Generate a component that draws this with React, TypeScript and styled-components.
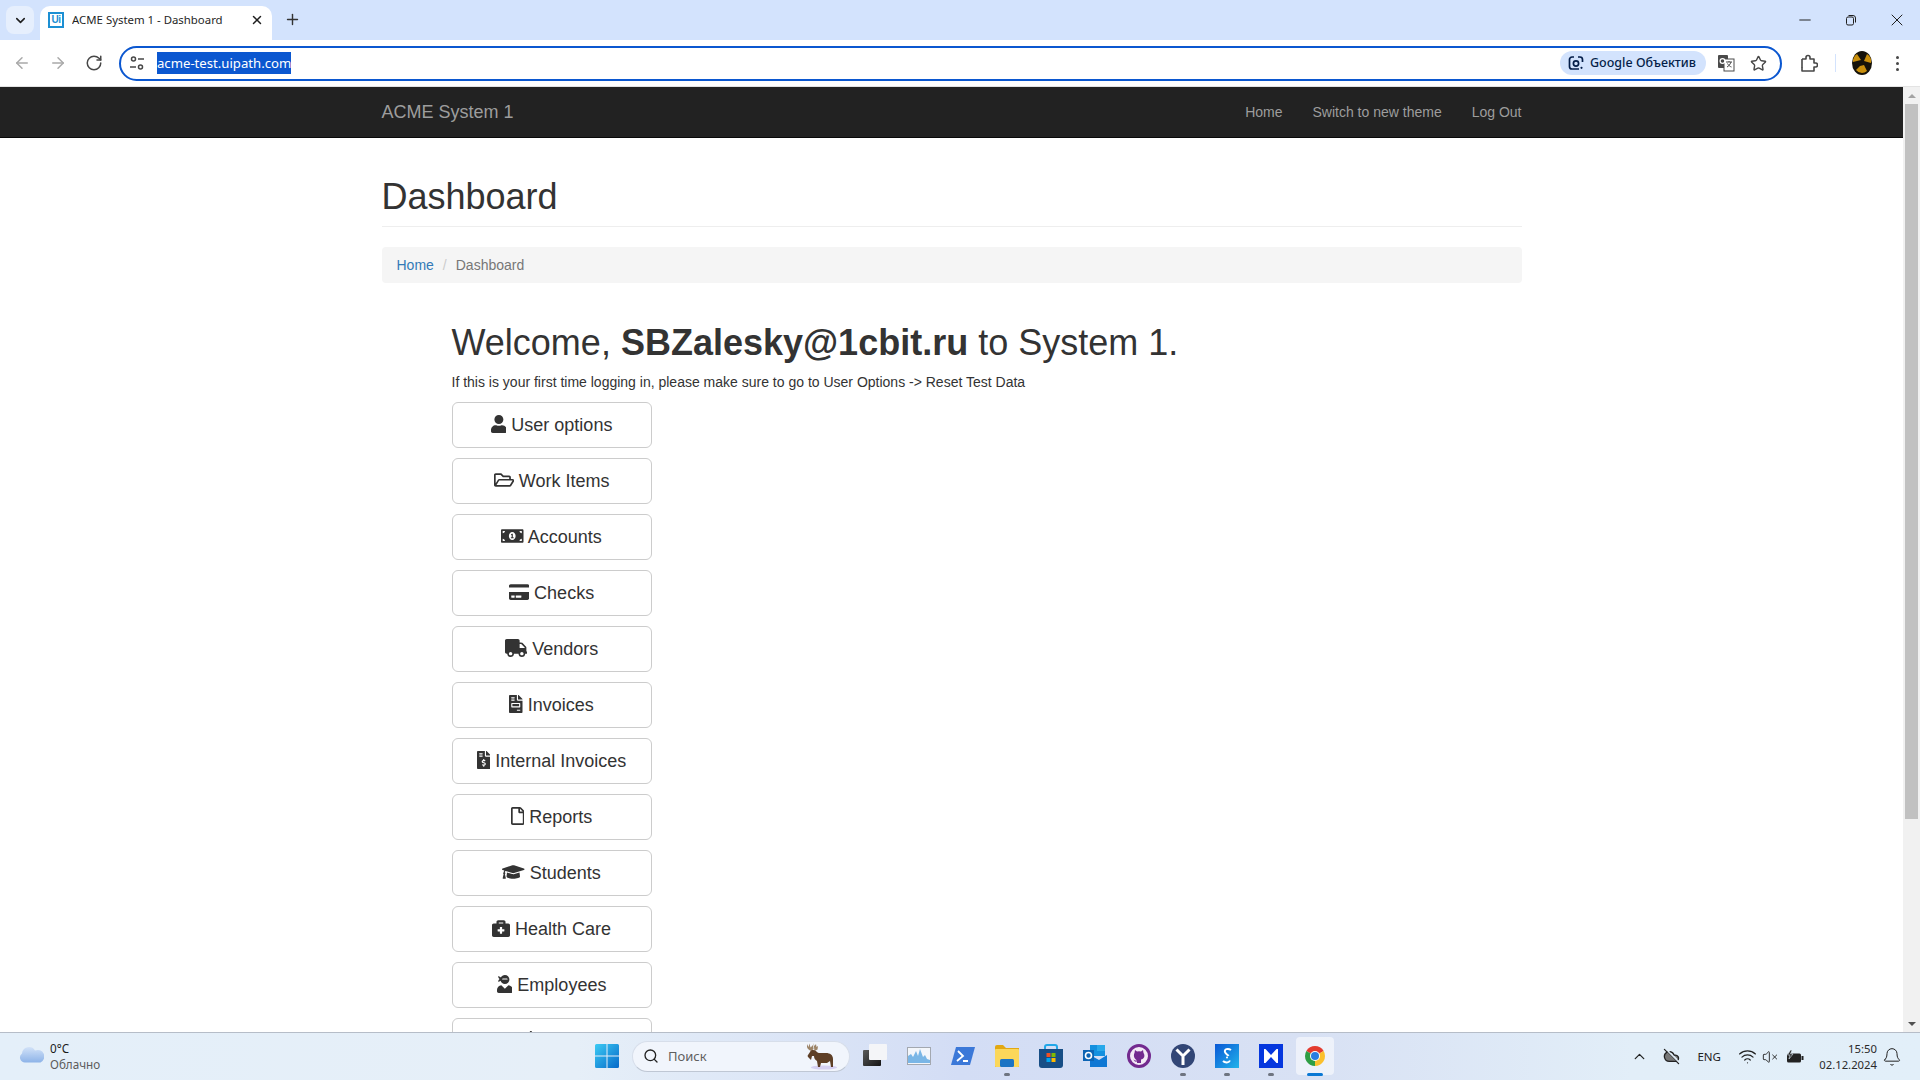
import React from "react";
import styled, { createGlobalStyle } from "styled-components";
import {
  FaUser, FaRegFolderOpen, FaMoneyBillAlt, FaCreditCard, FaTruck, FaFileInvoice,
  FaFileInvoiceDollar, FaRegFile, FaGraduationCap, FaBriefcaseMedical, FaUserNinja, FaBell,
} from "react-icons/fa";
import {
  ArrowLeft, ArrowRight, RotateCw, Star, X, Plus, ChevronDown, Minus, ChevronUp,
  Bell, Wifi, Search, VolumeX, CloudOff,
} from "lucide-react";

const Global = createGlobalStyle`
  html, body { margin: 0; padding: 0; height: 100%; overflow: hidden; background: #fff; }
  * { box-sizing: border-box; }
  #root { height: 100%; }
`;

const Screen = styled.div`
  height: 1080px; width: 1920px; display: flex; flex-direction: column; overflow: hidden;
  font-family: "Liberation Sans", Arial, sans-serif; color: #333;
`;

/* ---------- Browser chrome ---------- */
const UiFont = `"Noto Sans", "Open Sans", sans-serif`;
const TabStrip = styled.div`
  height: 40px; flex: none; background: #d3e3fd; display: flex; align-items: flex-end;
  padding-left: 6px; color: #1f1f1f;
`;
const TabSearch = styled.div`
  width: 28px; height: 28px; margin-bottom: 6px; border-radius: 8px; background: #e6effd;
  display: flex; align-items: center; justify-content: center;
`;
const Tab = styled.div`
  width: 232px; height: 34px; margin-left: 6px; background: #fff; border-radius: 10px 10px 0 0;
  display: flex; align-items: center; padding: 0 8px 6px; gap: 8px;
`;
const Favicon = styled.div`
  width: 16px; height: 16px; flex: none; border: 2px solid #1c8fd3; color: #1c8fd3;
  font: bold 10px/12px "Liberation Sans", sans-serif; text-align: center; letter-spacing: -0.5px;
`;
const TabTitle = styled.span`
  flex: 1; font: 11.4px/16px ${UiFont}; white-space: nowrap; overflow: hidden; color: #1f1f1f;
`;
const NewTab = styled.div`
  width: 28px; height: 28px; margin: 0 0 6px 6px; display: flex; align-items: center; justify-content: center;
  transform: translateY(-1px);
`;
const StripSpacer = styled.div`flex: 1;`;
const WindowButtons = styled.div`
  display: flex; align-self: stretch; align-items: center; padding-right: 23px; gap: 46px; color: #1f1f1f;
`;
const WindowButton = styled.div`width: 0; display: flex; justify-content: center; align-items: center; & > svg { flex: none; }`;

const Toolbar = styled.div`
  height: 47px; flex: none; background: #fff; border-bottom: 1px solid #e3e3e3; display: flex; align-items: center;
  border-radius: 0 8px 0 0; position: relative; color: #474747;
`;
const NavButtons = styled.div`
  width: 119px; flex: none; display: flex; align-items: center; padding-left: 13px; gap: 18px;
`;
const AddressBar = styled.div`
  width: 1663px; height: 35px; flex: none; border: 2px solid #0b57d0; border-radius: 18px; display: flex; align-items: center;
  padding: 0 9px 0 8px; background: #fff;
`;
const UrlText = styled.span`
  margin-left: 12px; background: #0b57d0; color: #fff; font: 13.15px/22px ${UiFont}; height: 22px; white-space: nowrap;
`;
const BarSpacer = styled.div`flex: 1;`;
const LensChip = styled.div`
  width: 146px; height: 24px; border-radius: 12px; background: #d3e3fd; display: flex; align-items: center;
  padding-left: 8px; gap: 6px; color: #041e49; font: 500 12.5px/16px ${UiFont}; white-space: nowrap;
`;
const BarIcons = styled.div`
  display: flex; align-items: center; gap: 15px; margin-left: 11px; margin-right: 4px;
`;
const ToolbarRight = styled.div`
  flex: 1; display: flex; align-items: center; padding-left: 18px; gap: 0;
`;
const Separator = styled.div`width: 1px; height: 18px; background: #d3e3fd; margin: 0 15px 0 17px;`;
const Avatar = styled.div`margin-right: 23px; display: flex;`;
const Dots = styled.div`display: flex; flex-direction: column; gap: 3px;`;
const Dot = styled.span`width: 3px; height: 3px; border-radius: 50%; background: #474747; display: block;`;

/* ---------- Page viewport ---------- */
const Viewport = styled.div`flex: 1; min-height: 0; display: flex;`;
const Page = styled.main`flex: 1; min-width: 0; overflow: hidden; background: #fff;`;

const Navbar = styled.nav`
  height: 51px; background: #222; border-bottom: 1px solid #080808;
`;
const Container = styled.div`
  width: 1170px; margin: 0 auto; padding: 0 15px;
`;
const NavInner = styled(Container)`
  display: flex; justify-content: space-between; align-items: center; height: 50px; padding-bottom: 1px;
`;
const Brand = styled.a`font-size: 18px; line-height: 20px; color: #9d9d9d;`;
const NavLinks = styled.div`display: flex; gap: 30px;`;
const NavLink = styled.a`font-size: 14px; line-height: 20px; color: #9d9d9d;`;

const PageHeader = styled.header`
  margin: 39px 0 20px; padding-bottom: 9px; border-bottom: 1px solid #eee;
`;
const Title = styled.h1`
  margin: 0; font-size: 36px; line-height: 39.6px; font-weight: 500; color: #333;
`;
const Breadcrumb = styled.div`
  background: #f5f5f5; border-radius: 4px; padding: 8px 15px; font-size: 14px; line-height: 20px;
  margin-bottom: 20px; display: flex;
`;
const Crumb = styled.a`color: #337ab7;`;
const CrumbSep = styled.span`color: #ccc; padding: 0 9px;`;
const CrumbCurrent = styled.span`color: #777;`;
const Body = styled.section`padding: 20px 70px 0;`;
const Welcome = styled.h1`
  margin: 0 0 10px; font-size: 36px; line-height: 39.6px; font-weight: 500; color: #333;
  & strong { font-weight: 700; }
`;
const Lead = styled.p`margin: 0 0 10px; font-size: 14px; line-height: 20px; color: #333;`;
const MenuList = styled.div`display: flex; flex-direction: column; gap: 10px;`;
const MenuButton = styled.a`
  display: block; width: 200px; height: 46px; padding: 10px 16px; border: 1px solid #ccc; border-radius: 6px;
  background: #fff; color: #333; font-size: 18px; line-height: 24px; text-align: center; white-space: nowrap;
`;
const MenuGlyph = styled.span<{ $w: number }>`
  display: inline-block; width: ${(p) => p.$w}px; height: 18px; vertical-align: -2px;
  & > svg { display: block; width: 100%; height: 100%; }
`;

const Scrollbar = styled.div`
  width: 17px; flex: none; background: #f1f1f1; display: flex; flex-direction: column; align-items: center;
`;
const ScrollArrow = styled.div<{ $down?: boolean }>`
  height: 17px; flex: none; width: 100%; display: flex; align-items: center; justify-content: center;
  &::before {
    content: ""; border-left: 4px solid transparent; border-right: 4px solid transparent;
    ${(p) => (p.$down ? "border-top: 4px solid #505050;" : "border-bottom: 4px solid #a3a3a3;")}
  }
`;
const ScrollThumb = styled.div`width: 13px; height: 715px; background: #c1c1c1; flex: none;`;
const ScrollGap = styled.div`flex: 1;`;

/* ---------- Taskbar ---------- */
const Taskbar = styled.footer`
  height: 48px; flex: none; border-top: 1px solid #b6bdc8;
  background: linear-gradient(90deg, #e4eff9 0%, #e6eff8 30%, #d3ddf5 50%, #d8e1f4 68%, #e2eef8 85%, #e2eff9 100%);
  display: grid; grid-template-columns: 1fr auto 1fr; align-items: center; font-family: ${UiFont}; color: #1a1a1a;
`;
const Weather = styled.div`display: flex; align-items: center; padding-left: 18px; gap: 6px;`;
const WeatherGlyph = styled.div`display: flex; margin-bottom: 6px;`;
const WeatherText = styled.div`display: flex; flex-direction: column; font-size: 11.7px; line-height: 16px; margin-top: -2px;`;
const WeatherNote = styled.span`color: #5c5c5c;`;
const TaskCenter = styled.div`display: flex; align-items: center; padding: 0 0 1px 2px;`;
const SearchBox = styled.div`
  width: 218px; height: 31px; border-radius: 16px; background: #f1f5fc; border: 1px solid #d7deea; border-bottom-color: #bfc7d4;
  display: flex; align-items: center; padding: 0 11px 0 10px; gap: 9px; color: #5f5f5f; font-size: 13px; margin: 0 3px;
`;
const SearchLabel = styled.span`flex: 1;`;
const TaskIcon = styled.div<{ $active?: boolean }>`
  width: 44px; height: 46px; position: relative; display: flex; align-items: center; justify-content: center;
  &::before {
    content: ""; position: absolute; left: 3px; right: 3px; top: 4px; bottom: 4px; border-radius: 4px;
    background: ${(p) => (p.$active ? "rgba(255,255,255,.55)" : "transparent")};
  }
  & > svg { position: relative; }
`;
const RunDot = styled.span<{ $active?: boolean }>`
  position: absolute; bottom: 3px; left: 50%; transform: translateX(-50%); height: 3px; border-radius: 2px;
  width: ${(p) => (p.$active ? "16px" : "6px")}; background: ${(p) => (p.$active ? "#0a78d4" : "#6e7480")};
`;
const Tray = styled.div`
  display: flex; align-items: center; justify-content: flex-end; color: #222; padding-right: 18px;
`;
const TraySlot = styled.div<{ $w: number }>`
  width: ${(p) => p.$w}px; display: flex; justify-content: center; align-items: center; font-size: 11.5px;
`;
const Clock = styled.div`
  display: flex; flex-direction: column; align-items: flex-end; font-size: 11.3px; line-height: 16px; margin-left: 11px; margin-right: 5px; color: #2a2a2a; white-space: nowrap;
`;

/* ---------- Drawings ---------- */
const TuneIcon = () => (
  <svg width="16" height="16" viewBox="0 0 16 16" fill="none" stroke="#474747" strokeWidth="1.5">
    <circle cx="4.5" cy="4" r="2" /><path d="M9 4h6M1 12h6" /><circle cx="11.5" cy="12" r="2" />
  </svg>
);
const RestoreIcon = () => (
  <svg width="12" height="12" viewBox="0 0 12 12" fill="none" stroke="#1f1f1f" strokeWidth="1">
    <rect x="1.5" y="3" width="7" height="8" rx="1.5" /><path d="M3.5 1.5h4.5a2.5 2.5 0 0 1 2.5 2.5v4.5" />
  </svg>
);
const LensIcon = () => (
  <svg width="16" height="16" viewBox="0 0 16 16" fill="none" stroke="#041e49" strokeWidth="1.7">
    <path d="M6 2H4a2.5 2.5 0 0 0-2.5 2.5v7A2.5 2.5 0 0 0 4 14h7M10 2h2a2.5 2.5 0 0 1 2.5 2.5V7" />
    <circle cx="8" cy="8.5" r="2.6" /><circle cx="13.5" cy="12.8" r="1.1" fill="#041e49" stroke="none" />
  </svg>
);
const TranslateIcon = () => (
  <svg width="18" height="18" viewBox="0 0 18 18">
    <rect x="1" y="1" width="10" height="13" rx="1" fill="#4a4a4a" />
    <rect x="7" y="5" width="10" height="12" fill="#fff" stroke="#4a4a4a" />
    <circle cx="5.5" cy="7" r="2.4" fill="none" stroke="#fff" strokeWidth="1.2" />
    <path d="M9 8h6M12 7v1M14 8c-1 3-2.500 4-4 5M10.500 9.500c1 2 2.500 3 4 3.500" fill="none" stroke="#4a4a4a" />
  </svg>
);
const ExtensionIcon = () => (
  <svg width="18" height="18" viewBox="0 0 18 18" fill="none" stroke="#474747" strokeWidth="1.6" strokeLinejoin="round">
    <path d="M2 5h4V3.500a2 2 0 0 1 4 0V5h4v4h1.500a2 2 0 0 1 0 4H14v4H2v-3.500" />
    <path d="M2 5v9" />
  </svg>
);
const ProfileIcon = () => (
  <svg width="22" height="24" viewBox="0 0 22 24">
    <ellipse cx="11" cy="12" rx="10" ry="12" fill="#15120a" />
    <path d="M10 9 6 3a9 9 0 0 0-4 8zM13 10l3-7a9 9 0 0 1 4 9zM9 15l-4 4a8 8 0 0 0 6 3 8 8 0 0 0 5-2l-3-6z" fill="#c98f0c" />
  </svg>
);
const CloudIcon = () => (
  <svg width="26" height="18" viewBox="0 0 26 18">
    <defs><linearGradient id="cl" x1="0" y1="0" x2="0" y2="1"><stop offset="0" stopColor="#d2e2f8" /><stop offset="1" stopColor="#8db3e8" /></linearGradient></defs>
    <path d="M6 17.500A5 5 0 0 1 3 8.500 7 7 0 0 1 16 5.500 5.500 5.500 0 0 1 21.500 17.500z" fill="url(#cl)" transform="translate(1 0)" />
  </svg>
);
const WindowsLogo = () => (
  <svg width="24" height="24" viewBox="0 0 24 24">
    <defs><linearGradient id="wl" x1="0" y1="0" x2="1" y2="1"><stop offset="0" stopColor="#3ccbf4" /><stop offset="1" stopColor="#0669c9" /></linearGradient></defs>
    <path d="M0 1.500A1.500 1.500 0 0 1 1.500 0h10v11.500H0zM12.500 0h10A1.500 1.500 0 0 1 24 1.500v10H12.500zM0 12.500h11.500V24h-10A1.500 1.500 0 0 1 0 22.500zM12.500 12.500H24v10a1.500 1.500 0 0 1-1.500 1.500h-10z" fill="url(#wl)" />
  </svg>
);
const Moose = () => (
  <svg width="34" height="27" viewBox="0 0 34 27">
    <ellipse cx="20" cy="24.500" rx="13" ry="2" fill="#d5d0f2" />
    <path d="M3 1l1.500 3 1-3.500 1 4L9 2l.5 4-2 2c-2-.5-4-2-4.500-4z" fill="#9c8468" />
    <path d="M9.500 0l1 3 1.500-2 .5 3 1.500-1-.5 3.500-3 1.500z" fill="#9c8468" />
    <path d="M6 9c1-2.500 4-2.500 6-1 1 .8 1.500 2 3 2h7c4 0 7 2 7 6v8h-2l-1-6-3 2-6 0-1 4h-2l-1-6c-2-1-3-3-3-5l-2 0-1 4-2-2c-1-1-2-2-1-3z" fill="#5e3f27" />
  </svg>
);
const DesktopsIcon = () => (
  <svg width="24" height="24" viewBox="0 0 24 24">
    <defs><linearGradient id="dk" x1="0" y1="0" x2="1" y2="1"><stop offset="0" stopColor="#5a5a5a" /><stop offset="1" stopColor="#141414" /></linearGradient></defs>
    <rect x="0" y="6" width="18" height="16" rx="1" fill="url(#dk)" />
    <rect x="6" y="0" width="18" height="16" rx="1" fill="#f4f5f8" />
  </svg>
);
const MonitorIcon = () => (
  <svg width="24" height="18" viewBox="0 0 24 18">
    <rect x="0.500" y="0.500" width="23" height="17" fill="#f3f6fb" stroke="#a3a8b0" />
    <path d="M1 16V9l3-2 2 3 3-6 2 5 2-7 3 8 2-2 2 4 3 1v3z" fill="#7ab6e6" />
  </svg>
);
const PsIcon = () => (
  <svg width="24" height="18" viewBox="0 0 24 18">
    <path d="M5 0h19l-5 18H0z" fill="#3b78d8" />
    <path d="M7 4l5 5-6 5M12 14h5" fill="none" stroke="#fff" strokeWidth="1.800" />
  </svg>
);
const FolderIcon = () => (
  <svg width="24" height="22" viewBox="0 0 24 22">
    <path d="M0 2a2 2 0 0 1 2-2h6l3 3h13v19H0z" fill="#e2a812" />
    <rect y="4" width="24" height="18" rx="1" fill="#fbd75a" />
    <rect x="5" y="14" width="14" height="8" rx="1.500" fill="#1b74c4" />
  </svg>
);
const StoreIcon = () => (
  <svg width="24" height="24" viewBox="0 0 24 24">
    <path d="M6 5V3a2 2 0 0 1 2-2h8a2 2 0 0 1 2 2v2" fill="none" stroke="#22a7e8" strokeWidth="2" />
    <path d="M0 5h24v16a3 3 0 0 1-3 3H3a3 3 0 0 1-3-3z" fill="#174e86" />
    <rect x="7.500" y="9" width="4" height="4" fill="#f25022" /><rect x="12.500" y="9" width="4" height="4" fill="#7fba00" />
    <rect x="7.500" y="14" width="4" height="4" fill="#00a4ef" /><rect x="12.500" y="14" width="4" height="4" fill="#ffb900" />
  </svg>
);
const OutlookIcon = () => (
  <svg width="24" height="22" viewBox="0 0 24 22">
    <rect x="7" y="0" width="15" height="11" fill="#1490df" />
    <rect x="14" y="0" width="8" height="6" fill="#28a8ea" />
    <path d="M7 10l9 5 8-5v12H7z" fill="#0f78d4" />
    <rect x="0" y="5" width="11" height="11" fill="#0c64b4" />
    <circle cx="5.500" cy="10.500" r="3" fill="none" stroke="#fff" strokeWidth="1.600" />
  </svg>
);
const GithubIcon = () => (
  <svg width="24" height="24" viewBox="0 0 24 24">
    <circle cx="12" cy="12" r="10.500" fill="#f3eaf6" stroke="#732a8f" strokeWidth="3" />
    <path d="M8 6l2 1.500a7 7 0 0 1 4 0L16 6l.5 3c2 3 .5 6-2.500 6.500V19h-4v-1.500c-2 .5-3-.5-3.500-2 1 .5 1.500 1.500 3.500.8C7.500 15 6 12 7.500 9z" fill="#732a8f" />
  </svg>
);
const YIcon = () => (
  <svg width="24" height="24" viewBox="0 0 24 24">
    <circle cx="12" cy="12" r="12" fill="#324676" />
    <path d="M5.500 5.500 12 12l6.500-6.500M12 12v9" fill="none" stroke="#fff" strokeWidth="3" />
  </svg>
);
const SquareSIcon = () => (
  <svg width="24" height="24" viewBox="0 0 24 24">
    <defs><linearGradient id="ss" x1="0" y1="0" x2="1" y2="1"><stop offset="0" stopColor="#0a58d6" /><stop offset="1" stopColor="#22b4ea" /></linearGradient></defs>
    <rect width="24" height="24" fill="url(#ss)" />
    <path d="M16 6c-3-2-7-1-6 2 .5 2 3 3 3.500 4" fill="none" stroke="#fff" strokeWidth="2" />
    <path d="M8 17c2 2 6 2 7-.5" fill="none" stroke="#fff" strokeWidth="2" />
    <circle cx="12" cy="13.500" r="1" fill="#fff" />
  </svg>
);
const BowtieIcon = () => (
  <svg width="24" height="24" viewBox="0 0 24 24">
    <rect width="24" height="24" fill="#0537de" />
    <rect x="5" y="5" width="14" height="14" fill="#fff" />
    <path d="M6.500 5h11L12 11zM6.500 19h11L12 13z" fill="#0537de" />
  </svg>
);
const ChromeIcon = () => (
  <svg width="24" height="24" viewBox="0 0 48 48">
    <path d="M24 24 6.680 14A20 20 0 0 1 41.320 14z" fill="#e33b2e" />
    <path d="M24 24 41.320 14A20 20 0 0 1 24 44z" fill="#fbc02d" />
    <path d="M24 24 24 44A20 20 0 0 1 6.680 14z" fill="#2f9e44" />
    <circle cx="24" cy="24" r="10" fill="#fff" /><circle cx="24" cy="24" r="8" fill="#2a7de1" />
  </svg>
);
const BatteryIcon = () => (
  <svg width="18" height="14" viewBox="0 0 18 14">
    <rect x="1" y="3.500" width="14" height="9" rx="1.500" fill="#222" />
    <rect x="15.500" y="6" width="2" height="4" fill="#222" />
    <path d="M4.500 0 1.500 5h2.500L3 9l4-5H4.500L6 0z" fill="#222" stroke="#e2eef8" strokeWidth=".6" />
  </svg>
);

/* ---------- Data ---------- */
const menu = [
  { label: "User options", Icon: FaUser, w: 15.75 },
  { label: "Work Items", Icon: FaRegFolderOpen, w: 20.25 },
  { label: "Accounts", Icon: FaMoneyBillAlt, w: 22.5 },
  { label: "Checks", Icon: FaCreditCard, w: 20.25 },
  { label: "Vendors", Icon: FaTruck, w: 22.5 },
  { label: "Invoices", Icon: FaFileInvoice, w: 13.5 },
  { label: "Internal Invoices", Icon: FaFileInvoiceDollar, w: 13.5 },
  { label: "Reports", Icon: FaRegFile, w: 13.5 },
  { label: "Students", Icon: FaGraduationCap, w: 22.5 },
  { label: "Health Care", Icon: FaBriefcaseMedical, w: 18 },
  { label: "Employees", Icon: FaUserNinja, w: 15.75 },
  { label: "Alert", Icon: FaBell, w: 15.75 },
];

const pinned = [
  { el: <DesktopsIcon /> },
  { el: <MonitorIcon /> },
  { el: <PsIcon /> },
  { el: <FolderIcon />, running: true },
  { el: <StoreIcon /> },
  { el: <OutlookIcon /> },
  { el: <GithubIcon /> },
  { el: <YIcon />, running: true },
  { el: <SquareSIcon />, running: true },
  { el: <BowtieIcon />, running: true },
  { el: <ChromeIcon />, running: true, active: true },
];

export default function App() {
  return (
    <Screen>
      <Global />
      <TabStrip>
        <TabSearch><ChevronDown size={15} strokeWidth={2.5} /></TabSearch>
        <Tab>
          <Favicon>Ui</Favicon>
          <TabTitle>ACME System 1 - Dashboard</TabTitle>
          <X size={14} strokeWidth={2.5} />
        </Tab>
        <NewTab><Plus size={17} strokeWidth={2} color="#333" /></NewTab>
        <StripSpacer />
        <WindowButtons>
          <WindowButton><Minus size={18} strokeWidth={1.3} /></WindowButton>
          <WindowButton><RestoreIcon /></WindowButton>
          <WindowButton><X size={20} strokeWidth={1.2} /></WindowButton>
        </WindowButtons>
      </TabStrip>

      <Toolbar>
        <NavButtons>
          <ArrowLeft size={18} color="#a9a9a9" />
          <ArrowRight size={18} color="#a9a9a9" />
          <RotateCw size={18} strokeWidth={2} />
        </NavButtons>
        <AddressBar>
          <TuneIcon />
          <UrlText>acme-test.uipath.com</UrlText>
          <BarSpacer />
          <LensChip><LensIcon />Google Объектив</LensChip>
          <BarIcons>
            <TranslateIcon />
            <Star size={17} strokeWidth={2} />
          </BarIcons>
        </AddressBar>
        <ToolbarRight>
          <ExtensionIcon />
          <Separator />
          <Avatar><ProfileIcon /></Avatar>
          <Dots><Dot /><Dot /><Dot /></Dots>
        </ToolbarRight>
      </Toolbar>

      <Viewport>
        <Page>
          <Navbar>
            <NavInner>
              <Brand>ACME System 1</Brand>
              <NavLinks>
                <NavLink>Home</NavLink>
                <NavLink>Switch to new theme</NavLink>
                <NavLink>Log Out</NavLink>
              </NavLinks>
            </NavInner>
          </Navbar>
          <Container>
            <PageHeader><Title>Dashboard</Title></PageHeader>
            <Breadcrumb>
              <Crumb>Home</Crumb>
              <CrumbSep>/</CrumbSep>
              <CrumbCurrent>Dashboard</CrumbCurrent>
            </Breadcrumb>
            <Body>
              <Welcome>Welcome, <strong>SBZalesky@1cbit.ru</strong> to System 1.</Welcome>
              <Lead>If this is your first time logging in, please make sure to go to User Options -&gt; Reset Test Data</Lead>
              <MenuList>
                {menu.map(({ label, Icon, w }) => (
                  <MenuButton key={label}><MenuGlyph $w={w}><Icon /></MenuGlyph> {label}</MenuButton>
                ))}
              </MenuList>
            </Body>
          </Container>
        </Page>
        <Scrollbar>
          <ScrollArrow />
          <ScrollThumb />
          <ScrollGap />
          <ScrollArrow $down />
        </Scrollbar>
      </Viewport>

      <Taskbar>
        <Weather>
          <WeatherGlyph><CloudIcon /></WeatherGlyph>
          <WeatherText>
            <span>0°C</span>
            <WeatherNote>Облачно</WeatherNote>
          </WeatherText>
        </Weather>
        <TaskCenter>
          <TaskIcon><WindowsLogo /></TaskIcon>
          <SearchBox>
            <Search size={16} color="#222" strokeWidth={2} />
            <SearchLabel>Поиск</SearchLabel>
            <Moose />
          </SearchBox>
          {pinned.map((p, i) => (
            <TaskIcon key={i} $active={p.active}>
              {p.el}
              {p.running && <RunDot $active={p.active} />}
            </TaskIcon>
          ))}
        </TaskCenter>
        <Tray>
          <TraySlot $w={42}><ChevronUp size={17} strokeWidth={1.8} /></TraySlot>
          <TraySlot $w={22}><CloudOff size={17} fill="#777" strokeWidth={1.8} /></TraySlot>
          <TraySlot $w={54}>ENG</TraySlot>
          <TraySlot $w={22}><Wifi size={19} strokeWidth={1.5} /></TraySlot>
          <TraySlot $w={24}><VolumeX size={16} strokeWidth={1.4} /></TraySlot>
          <TraySlot $w={26}><BatteryIcon /></TraySlot>
          <Clock><span>15:50</span><span>02.12.2024</span></Clock>
          <Bell size={20} strokeWidth={1.2} />
        </Tray>
      </Taskbar>
    </Screen>
  );
}
